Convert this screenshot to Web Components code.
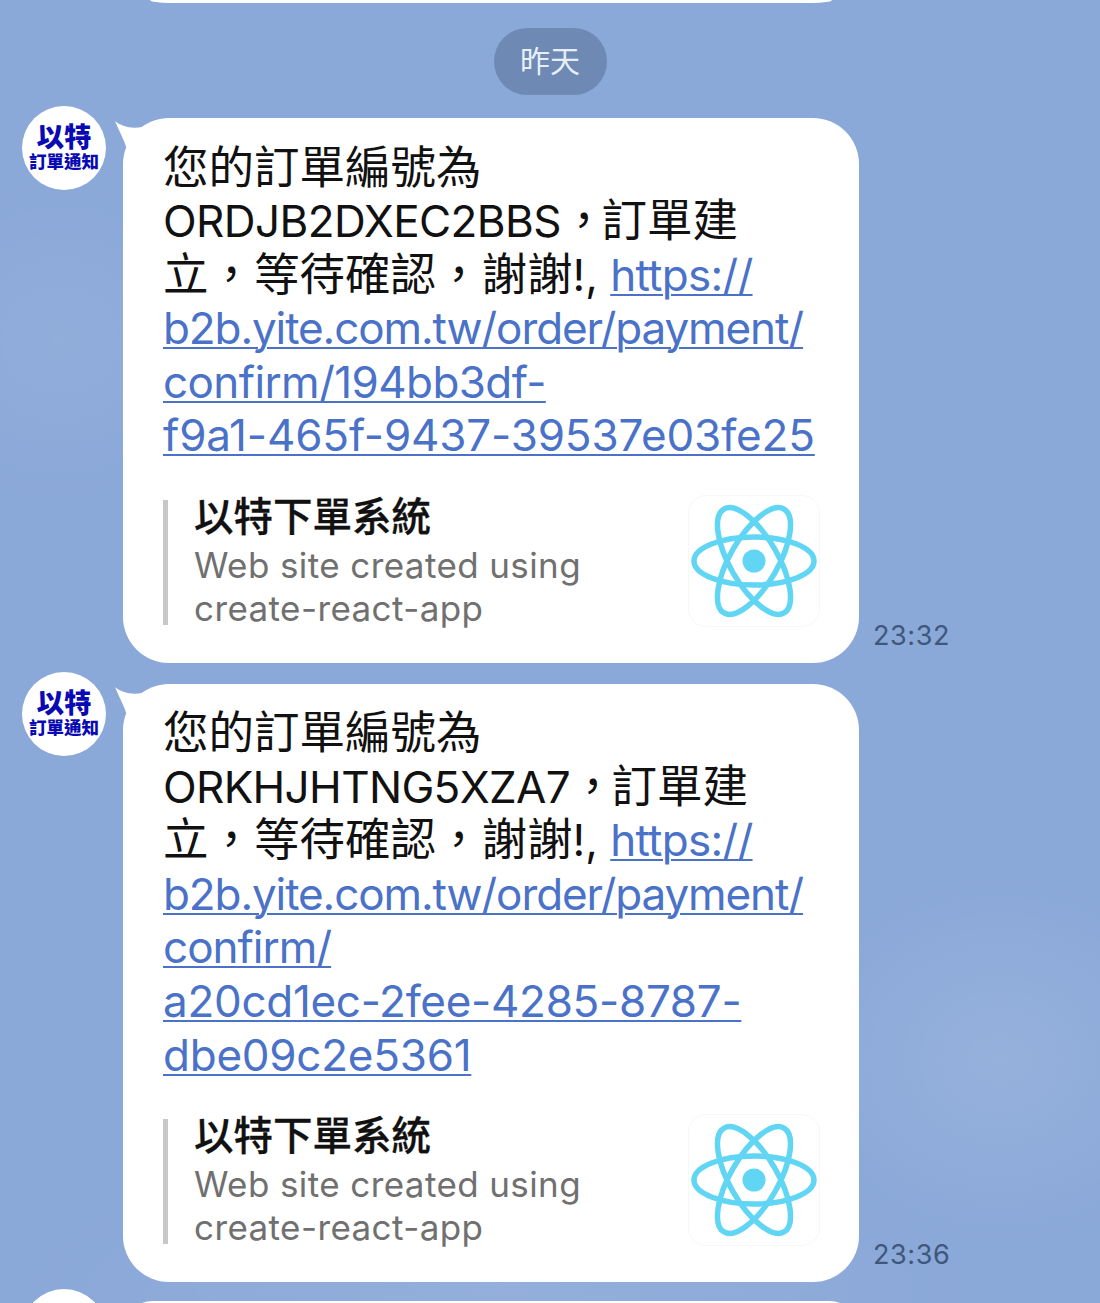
<!DOCTYPE html>
<html lang="zh-Hant">
<head>
<meta charset="utf-8">
<title>LINE</title>
<style>
  html, body { margin: 0; padding: 0; height: 100%; overflow: hidden; }
  body { font-family: Inter, "Noto Sans CJK TC", sans-serif; }
  /* the CJK runs sit a bit bigger than the latin ones, like the phone font */
  .c { font-size: 45.5px; line-height: 0; }
</style>
</head>
<body>
<chat-page>
  <date-pill>昨天</date-pill>
  <chat-message time="23:32">
    <span class="c">您的訂單編號為</span><br>
    <span style="letter-spacing:-.57px">ORDJB2DXEC2BBS</span><span class="c" style="letter-spacing:-5px">，</span><span class="c">訂單建</span><br>
    <span class="c">立，等待確認，謝謝</span>!, <a href="#" style="letter-spacing:-.75px">https://</a><br>
    <a href="#" style="letter-spacing:-1.1px">b2b.yite.com.tw/order/payment/</a><br>
    <a href="#" style="letter-spacing:-.6px">confirm/194bb3df-</a><br>
    <a href="#" style="letter-spacing:-.15px">f9a1-465f-9437-39537e03fe25</a>
  </chat-message>
  <chat-message time="23:36" class="last">
    <span class="c">您的訂單編號為</span><br>
    <span style="letter-spacing:-.65px">ORKHJHTNG5XZA7</span><span class="c" style="letter-spacing:-4px">，</span><span class="c">訂單建</span><br>
    <span class="c">立，等待確認，謝謝</span>!, <a href="#" style="letter-spacing:-.75px">https://</a><br>
    <a href="#" style="letter-spacing:-1.1px">b2b.yite.com.tw/order/payment/</a><br>
    <a href="#" style="letter-spacing:-1px">confirm/</a><br>
    <a href="#" style="letter-spacing:-.3px">a20cd1ec-2fee-4285-8787-</a><br>
    <a href="#" style="letter-spacing:-.25px">dbe09c2e5361</a>
  </chat-message>
  <chat-message class="next"></chat-message>
</chat-page>
<script>
(function () {
  const CJK = '"Noto Sans CJK TC", sans-serif';

  class ChatPage extends HTMLElement {
    connectedCallback() {
      const root = this.attachShadow({ mode: 'open' });
      root.innerHTML = `
        <style>
          :host { display:block; height:1303px; overflow:hidden;
            background:
              radial-gradient(ellipse 260px 240px at 60px 340px, rgba(255,255,255,.06), transparent 70%),
              radial-gradient(ellipse 300px 260px at 1000px 1060px, rgba(255,255,255,.1), transparent 72%),
              radial-gradient(ellipse 700px 200px at 500px 1290px, rgba(255,255,255,.08), transparent 70%),
              #8aa8d8; }
          .prev { height:3px; margin:0 268px 0 150px; background:#fff; border-radius:0 0 20px 20px / 0 0 3px 3px; }
          .list { display:flex; flex-direction:column; }
        </style>
        <div class="prev"></div>
        <div class="list"><slot></slot></div>`;
    }
  }

  class DatePill extends HTMLElement {
    connectedCallback() {
      const root = this.attachShadow({ mode: 'open' });
      root.innerHTML = `
        <style>
          :host { display:flex; justify-content:center; margin:25px 0 23px; }
          span { display:block; width:113px; height:67px; text-align:center; border-radius:34px;
            background:#6d89b4; color:#e8eef8; font:400 30px/63px ${CJK}; }
        </style>
        <span><slot></slot></span>`;
    }
  }

  class BotAvatar extends HTMLElement {
    connectedCallback() {
      const root = this.attachShadow({ mode: 'open' });
      const blank = this.hasAttribute('blank');
      root.innerHTML = `
        <style>
          :host { display:flex; flex-direction:column; align-items:center; box-sizing:border-box; width:84px; height:84px;
            padding-top:14px; border-radius:50%; background:#fff; color:#0a0ab4; font-family:${CJK}; font-weight:900; }
          .a { font-size:27.5px; line-height:30px; }
          .b { font-size:17.5px; line-height:20px; margin-top:1px; }
        </style>
        ${blank ? '' : '<div class="a">以特</div><div class="b">訂單通知</div>'}`;
    }
  }

  class ReactLogo extends HTMLElement {
    connectedCallback() {
      const root = this.attachShadow({ mode: 'open' });
      root.innerHTML = `
        <style>
          :host { display:flex; align-items:center; justify-content:center; box-sizing:border-box; width:132px; height:132px;
            border:1px solid #f6f7f7; border-radius:18px; background:#fff; }
          svg { display:block; }
        </style>
        <svg width="130" height="130" viewBox="0 0 130 130" fill="none" stroke="#61d5f4" stroke-width="5.5">
          <circle cx="65" cy="65" r="11.5" fill="#61d5f4" stroke="none"/>
          <ellipse cx="65" cy="65" rx="60" ry="24"/>
          <ellipse cx="65" cy="65" rx="60" ry="24" transform="rotate(60 65 65)"/>
          <ellipse cx="65" cy="65" rx="60" ry="24" transform="rotate(120 65 65)"/>
        </svg>`;
    }
  }

  class LinkPreview extends HTMLElement {
    connectedCallback() {
      const root = this.attachShadow({ mode: 'open' });
      root.innerHTML = `
        <style>
          :host { display:flex; align-items:center; justify-content:space-between; height:132px; }
          .info { box-sizing:border-box; height:125px; width:480px; border-left:5px solid #c8c8c8; padding-left:26px; margin-top:3px; }
          .title { font:500 39.5px/36px ${CJK}; -webkit-text-stroke:.3px #111; color:#111; white-space:nowrap; margin-top:-4px; }
          .desc { font:400 35px/43px Inter, ${CJK}; letter-spacing:.4px; color:#707070; margin-top:12px; white-space:nowrap; }
        </style>
        <div class="info">
          <div class="title">以特下單系統</div>
          <div class="desc">Web site created using<br>create-react-app</div>
        </div>
        <react-logo></react-logo>`;
    }
  }

  class ChatMessage extends HTMLElement {
    connectedCallback() {
      const root = this.attachShadow({ mode: 'open' });
      const next = this.classList.contains('next');
      const gap = this.classList.contains('last') ? 19 : 21;
      root.innerHTML = `
        <style>
          :host { display:flex; align-items:flex-start; padding-left:22px; margin-bottom:${gap}px; }
          bot-avatar { flex:none; margin-top:-12px; margin-right:17px; }
          .bubble { position:relative; box-sizing:border-box; width:736px; padding:23.5px 39px 36px 40px; background:#fff; border-radius:46px; }
          .tail { position:absolute; left:-9px; top:2px; }
          .text { font:400 44px/53.6px Inter, ${CJK}; color:#111; white-space:nowrap; margin-bottom:31.5px; }
          ::slotted(a) { color:#4a72c8; text-decoration:underline; text-decoration-thickness:2px; text-underline-offset:3px; }
          .time { align-self:flex-end; margin-left:14px; margin-bottom:12px; font:400 27px/30px Inter, sans-serif; color:#40577c; letter-spacing:.6px; }
        </style>
        <bot-avatar ${next ? 'blank' : ''}></bot-avatar>
        <div class="bubble">
          <svg class="tail" width="30" height="30" viewBox="0 0 30 30" fill="#fff"><path d="M1 1 C7 6 16 9 28 7 L28 30 L13 30 C12 24 6 13 1 1 Z"/></svg>
          ${next ? '' : `<div class="text"><slot></slot></div><link-preview></link-preview>`}
        </div>
        ${next ? '' : `<div class="time">${this.getAttribute('time')}</div>`}`;
    }
  }

  customElements.define('chat-page', ChatPage);
  customElements.define('date-pill', DatePill);
  customElements.define('bot-avatar', BotAvatar);
  customElements.define('react-logo', ReactLogo);
  customElements.define('link-preview', LinkPreview);
  customElements.define('chat-message', ChatMessage);
})();
</script>
</body>
</html>
